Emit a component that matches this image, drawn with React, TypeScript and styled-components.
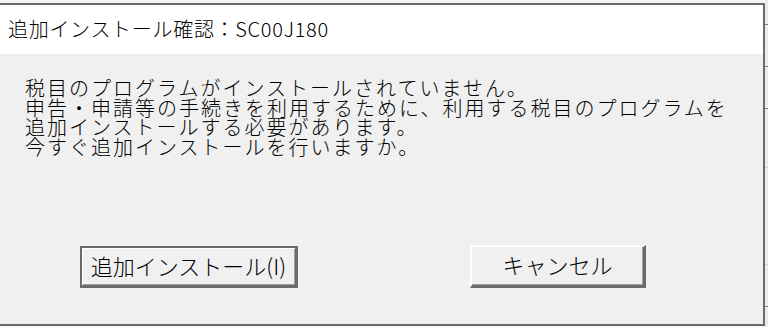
import React from "react"
import styled, { createGlobalStyle } from "styled-components"

const GlobalStyle = createGlobalStyle`
        html, body {
                margin: 0;
                padding: 0;
                background: #f4f4f4;
                overflow: hidden;
        }

        body {
                font-family: "Noto Sans CJK JP", "Noto Sans", sans-serif;
                font-weight: 300;
                color: #000;
        }
`;

const Screen = styled.div`
        display: flex;
        width: 768px;
        height: 327px;
        padding-top: 3px;
        box-sizing: border-box;
`;

const Window = styled.div`
        display: flex;
        flex-direction: column;

        width: 765px;
        height: 323px;
        box-sizing: border-box;

        border-top: 2px solid #6b6b6b;
        border-right: 2px solid #6b6b6b;
        border-bottom: 2px solid #6b6b6b;
        background: #f0f0f0;
`;

const TitleBar = styled.div`
        display: flex;
        align-items: center;

        height: 49px;
        padding-left: 8px;
        padding-bottom: 2px;
        box-sizing: border-box;
        background: #fff;

        font-size: 20px;
        letter-spacing: 0.7px;
        white-space: nowrap;
`;

const Body = styled.div`
        flex: 1;
        display: flex;
        flex-direction: column;
        padding-top: 24px;
`;

const Message = styled.div`
        padding-left: 25px;

        font-size: 20px;
        line-height: 19.7px;
        letter-spacing: 2px;
        white-space: nowrap;
`;

const ButtonRow = styled.div`
        display: flex;
        align-items: flex-end;
        gap: 172px;

        margin-top: 88px;
        padding-left: 80px;
`;

const Button = styled.button<{ $default?: boolean; $width: number }>`
        display: flex;
        align-items: center;
        justify-content: center;

        width: ${props => props.$width}px;
        height: ${props => (props.$default ? 42 : 43)}px;
        padding: 0 0 3px;
        box-sizing: border-box;

        font-family: "Noto Sans CJK JP", "Noto Sans", sans-serif;
        font-weight: 300;
        font-size: 22px;
        line-height: 1;
        color: #000;
        background: #f0f0f0;

        border-style: solid;
        border-width: 2px 3px 3px 2px;
        border-color: ${props => (props.$default
                ? "#6b6b6b"
                : "#ffffff #6b6b6b #6b6b6b #ffffff")};
        box-shadow: ${props => (props.$default
                ? "inset 1px 1px 0 #fff, inset -1px -1px 0 #a0a0a0"
                : "inset -1px -1px 0 #a0a0a0")};
`;

const BehindStrip = styled.div`
        display: flex;
        flex-direction: column;

        width: 3px;
        margin-top: -3px;
        background: #ececec;
`;

const StripRow = styled.div<{ $height: number; $line?: string }>`
        height: ${props => props.$height}px;
        border-bottom: 1px solid ${props => props.$line ?? "#7c7c7c"};
`;

const stripRows = [
        { height: 24 },
        { height: 41 },
        { height: 41 },
        { height: 58, line: "#d0d0d0" },
        { height: 96, line: "#d0d0d0" },
        { height: 41 },
]

const App: React.FunctionComponent = () => {

        return (
                <>
                        <GlobalStyle />
                        <Screen>
                                <Window>
                                        <TitleBar>追加インストール確認：SC00J180</TitleBar>
                                        <Body>
                                                <Message>
                                                        税目のプログラムがインストールされていません。<br />
                                                        申告・申請等の手続きを利用するために、利用する税目のプログラムを<br />
                                                        追加インストールする必要があります。<br />
                                                        今すぐ追加インストールを行いますか。
                                                </Message>
                                                <ButtonRow>
                                                        <Button $default $width={218}>追加インストール(I)</Button>
                                                        <Button $width={176}>キャンセル</Button>
                                                </ButtonRow>
                                        </Body>
                                </Window>
                                <BehindStrip>
                                        {stripRows.map((row, i) => (
                                                <StripRow key={i} $height={row.height} $line={row.line} />
                                        ))}
                                </BehindStrip>
                        </Screen>
                </>
        )
}

export default App;
